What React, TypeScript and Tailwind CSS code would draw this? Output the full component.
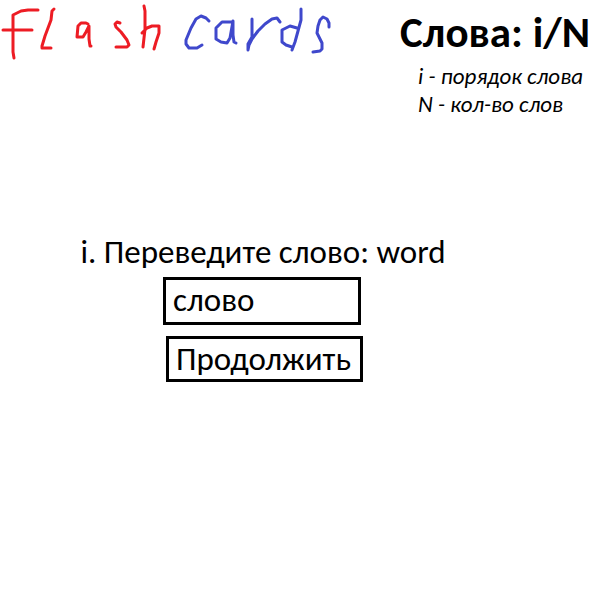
function Logo() {
  return (
    <svg
      className="block h-16 w-[336px] shrink-0"
      viewBox="0 0 336 64"
      fill="none"
      strokeWidth="3"
      strokeLinecap="round"
      strokeLinejoin="round"
      role="img"
      aria-label="Flash cards"
    >
      <g stroke="#ed1c24">
        <path d="M38 10H28L21 11L13 15V52L14 58M3 30H32" />
        <path d="M54 9L52 11L51 20L48 28L45 36L42 46V48H51" />
        <path d="M88 24L86 23H81L78 26L77 37L83 37L86 32L89 26V39L90 46H91" />
        <path d="M120 23L117 22L115 24L116 27L121 32L127 40L129 45L127 47H116" />
        <path d="M144 6L145 11V29L143 47M142 33L147 28L152 26L159 26V33L156 42L154 49" />
      </g>
      <g stroke="#3f48cc">
        <path d="M209 21L206 18L201 16L196 19L191 28L186 40V44L189 48L197 48L202 45" />
        <path d="M232 22H222L216 28V39L221 42L227 43L230 38L233 21V35L234 42L236 43" />
        <path d="M252 19V37L248 44V50L249 45L252 39L258 31L265 24L272 19L277 18L280 22" />
        <path d="M301 9V20L298 31L295 42L292 50M297 28L290 26L282 30V42L286 45L292 47" />
        <path d="M329 27V23L327 19L323 17L320 20L318 26L317 33L319 37L322 43V49L320 51L313 52" />
      </g>
    </svg>
  );
}

export default function App() {
  return (
    <div className="min-h-screen bg-white font-['Carlito','Lato','Noto_Sans',sans-serif] text-black">
      <header className="flex items-start justify-between">
        <Logo />
        <div className="pt-2 pr-2.5 whitespace-nowrap">
          <h1 className="text-[43px] leading-[50px] font-bold">Слова: i/N</h1>
          <div className="pt-1 pl-[18px] text-[23px] leading-7 italic">
            <p>i - порядок слова</p>
            <p>N - кол-во слов</p>
          </div>
        </div>
      </header>
      <main className="flex flex-col items-center pt-[114px] pr-[74px]">
        <form className="flex flex-col items-center" onSubmit={(e) => e.preventDefault()}>
          <label htmlFor="answer" className="text-[33px] leading-10 whitespace-nowrap">
            i. Переведите слово: word
          </label>
          <div className="flex w-[200px] flex-col gap-[11px] pt-[5px]">
            <input
              id="answer"
              type="text"
              defaultValue="слово"
              className="h-12 w-[198px] self-start border-3 border-black px-[7px] text-[33px] outline-none"
            />
            <button
              type="submit"
              className="h-[46px] w-[197px] self-end border-3 border-black px-[7px] text-left text-[33px] leading-10 whitespace-nowrap"
            >
              Продолжить
            </button>
          </div>
        </form>
      </main>
    </div>
  );
}
